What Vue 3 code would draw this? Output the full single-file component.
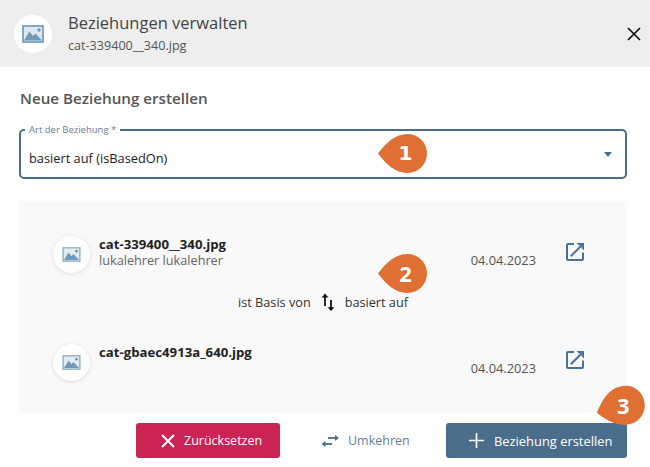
<script setup>
const rows = [
  { id: 1, name: 'cat-339400__340.jpg', user: 'lukalehrer lukalehrer', date: '04.04.2023' },
  { id: 2, name: 'cat-gbaec4913a_640.jpg', user: '', date: '04.04.2023' }
];
</script>

<template>
  <div class="dialog">
    <header class="head">
      <div class="avatar">
        <svg width="22" height="18" viewBox="0 0 22 18">
          <rect x="0" y="0" width="22" height="18" fill="#dbe6ee" />
          <rect x="1" y="1" width="20" height="16" fill="none" stroke="#6d9ab9" stroke-width="1.6" />
          <path d="M2 15.5 L7.5 6.5 L11 11 L13.5 8.5 L20 15.5Z" fill="#6d9ab9" />
          <circle cx="17" cy="5" r="1.7" fill="#6d9ab9" />
        </svg>
      </div>
      <div class="head-text">
        <div class="title">Beziehungen verwalten</div>
        <div class="sub">cat-339400__340.jpg</div>
      </div>
      <svg class="close" width="14" height="14" viewBox="0 0 14 14">
        <path d="M1 1 L13 13 M13 1 L1 13" stroke="#111" stroke-width="1.7" fill="none" />
      </svg>
    </header>

    <main class="content">
      <h2 class="section">Neue Beziehung erstellen</h2>

      <div class="select">
        <span class="select-label">Art der Beziehung *</span>
        <span class="select-value">basiert auf (isBasedOn)</span>
        <span class="caret"></span>
        <div class="badge badge-1">
          <svg width="49" height="39" viewBox="0 0 49 39"><path d="M0 19.5 C8 9 17 0 29.5 0 A19.5 19.5 0 0 1 29.5 39 C17 39 8 30 0 19.5Z" fill="#e06f34" /></svg>
          <span>1</span>
        </div>
      </div>

      <section class="panel">
        <div class="row" v-for="(r, i) in rows" :key="r.id">
          <div class="avatar shadow">
            <svg width="19" height="15" viewBox="0 0 22 18">
              <rect x="0" y="0" width="22" height="18" fill="#e3ebf1" />
              <rect x="1" y="1" width="20" height="16" fill="none" stroke="#8fb0c8" stroke-width="1.6" />
              <path d="M2 15.5 L7.5 6.5 L11 11 L13.5 8.5 L20 15.5Z" fill="#6d9ab9" />
              <circle cx="17" cy="5" r="1.7" fill="#6d9ab9" />
            </svg>
          </div>
          <div class="info">
            <div class="name">{{ r.name }}</div>
            <div class="user">{{ r.user }}</div>
          </div>
          <div class="date">{{ r.date }}</div>
          <svg class="open" width="18" height="18" viewBox="0 0 18 18">
            <path d="M8 1 H2 A1 1 0 0 0 1 2 V16 A1 1 0 0 0 2 17 H16 A1 1 0 0 0 17 16 V9.5" fill="none" stroke="#4a7299" stroke-width="2" />
            <path d="M4.8 13.2 L15.5 2.5" fill="none" stroke="#4a7299" stroke-width="2" />
            <path d="M10.5 0 H18 V7.5 L15.5 5 V2.5 H13Z" fill="#4a7299" />
          </svg>
          <div class="relation" v-if="i === 0">
            <span>ist Basis von</span>
            <svg width="14" height="18" viewBox="0 0 14 18">
              <path d="M4 13 V3" fill="none" stroke="#111" stroke-width="1.8" />
              <path d="M0.6 4.6 L4 0.6 L7.4 4.6Z" fill="#111" />
              <path d="M10 7 V16" fill="none" stroke="#111" stroke-width="1.8" />
              <path d="M6.6 14.2 L10 18 L13.4 14.2Z" fill="#111" />
            </svg>
            <span>basiert auf</span>
          </div>
        </div>
        <div class="badge badge-2">
          <svg width="49" height="39" viewBox="0 0 49 39"><path d="M0 19.5 C8 9 17 0 29.5 0 A19.5 19.5 0 0 1 29.5 39 C17 39 8 30 0 19.5Z" fill="#e06f34" /></svg>
          <span>2</span>
        </div>
      </section>

      <div class="actions">
        <button class="btn reset">
          <svg width="14" height="14" viewBox="0 0 14 14"><path d="M1 1 L13 13 M13 1 L1 13" stroke="#fff" stroke-width="2.1" fill="none" /></svg>
          Zurücksetzen
        </button>
        <button class="btn flip">
          <svg width="18" height="14" viewBox="0 0 18 14">
            <path d="M7 4 H15" fill="none" stroke="#4a6d8c" stroke-width="1.8" />
            <path d="M14 1 L18 4 L14 7Z" fill="#4a6d8c" />
            <path d="M4 10 H11" fill="none" stroke="#4a6d8c" stroke-width="1.8" />
            <path d="M4.5 7 L0.5 10 L4.5 13Z" fill="#4a6d8c" />
          </svg>
          Umkehren
        </button>
        <button class="btn create">
          <svg width="15" height="15" viewBox="0 0 15 15"><path d="M7.5 0 V15 M0 7.5 H15" stroke="#fff" stroke-width="1.7" fill="none" /></svg>
          Beziehung erstellen
          <div class="badge badge-3">
            <svg width="49" height="39" viewBox="0 0 49 39"><path d="M0 19.5 C8 9 17 0 29.5 0 A19.5 19.5 0 0 1 29.5 39 C17 39 8 30 0 19.5Z" fill="#e06f34" /></svg>
            <span>3</span>
          </div>
        </button>
      </div>
    </main>
  </div>
</template>

<style>
  html, body {
    margin: 0;
    background: #fff;
  }
</style>

<style scoped>
  .dialog {
    width: 650px;
    height: 467px;
    overflow: hidden;
    font-family: "Open Sans", sans-serif;
    color: #333;
  }

  .head {
    height: 67px;
    background: #eeeeee;
    display: flex;
    align-items: center;
    padding-left: 14px;
    padding-right: 10px;
    box-sizing: border-box;
  }

  .avatar {
    width: 38px;
    height: 38px;
    border-radius: 50%;
    background: #fff;
    display: flex;
    align-items: center;
    justify-content: center;
    flex: none;
  }

  .shadow {
    width: 37px;
    height: 37px;
    box-shadow: 0 1px 4px rgba(0, 0, 0, 0.12);
  }

  .head-text {
    margin-left: 16px;
    flex: 1;
    margin-top: 2px;
  }

  .title {
    font-size: 16.5px;
    line-height: 22px;
    color: #444;
  }

  .sub {
    font-size: 12.6px;
    line-height: 24px;
    color: #555;
  }

  .close {
    margin-right: -1px;
  }

  .content {
    padding: 0 23px 0 19px;
  }

  .section {
    margin: 21px 0 0 1px;
    font-size: 15.2px;
    line-height: 21px;
    font-weight: 600;
    color: #555;
  }

  .select {
    position: relative;
    height: 50px;
    margin-top: 20px;
    box-sizing: border-box;
    border: 2px solid #4a6d8c;
    border-radius: 5px;
    display: flex;
    align-items: center;
    padding: 8px 8px 0 8px;
  }

  .select-label {
    position: absolute;
    left: 4px;
    top: -8px;
    padding: 0 4px;
    background: #fff;
    font-size: 9.5px;
    line-height: 13px;
    color: #5f7f9b;
  }

  .select-value {
    font-size: 12.8px;
    color: #222;
    flex: 1;
  }

  .caret {
    width: 0;
    height: 0;
    border-left: 4.5px solid transparent;
    border-right: 4.5px solid transparent;
    border-top: 5px solid #4a6d8c;
    margin-right: 5px;
    margin-top: -7px;
  }

  .badge {
    position: absolute;
    width: 49px;
    height: 39px;
    line-height: 0;
  }

  .badge span {
    position: absolute;
    left: 17px;
    top: 0;
    width: 21px;
    height: 38px;
    line-height: 38px;
    text-align: center;
    color: #fff;
    font-size: 22px;
    font-weight: 700;
  }

  .badge-1 span {
    font-family: "DejaVu Sans", sans-serif;
    font-size: 20px;
  }

  .badge-1 {
    left: 357px;
    top: 3px;
  }

  .badge-2 {
    left: 359px;
    top: 53px;
  }

  .badge-3 {
    right: -18px;
    top: -36px;
    transform: rotate(-15deg);
  }

  .badge-3 span {
    transform: rotate(15deg);
  }

  .panel {
    position: relative;
    margin-top: 22px;
    height: 212px;
    background: #f9f9f9;
    padding: 35px 43px 0 34px;
    box-sizing: border-box;
  }

  .row {
    position: relative;
    display: flex;
    align-items: flex-start;
    height: 108px;
  }

  .info {
    margin-left: 9px;
    flex: 1;
  }

  .name {
    font-size: 13.2px;
    line-height: 18px;
    margin-top: -1px;
    font-weight: 700;
    color: #222;
  }

  .user {
    font-size: 12.7px;
    line-height: 15px;
    color: #666;
  }

  .date {
    font-size: 12.8px;
    line-height: 16px;
    color: #555;
    margin-top: 16px;
    margin-right: 31px;
  }

  .open {
    margin-top: 7px;
    margin-left: -1px;
  }

  .relation {
    position: absolute;
    left: 0;
    right: 0;
    top: 57px;
    padding-left: 9px;
    display: flex;
    justify-content: center;
    align-items: center;
    gap: 10px;
    font-size: 12.7px;
    color: #333;
  }

  .actions {
    display: flex;
    justify-content: flex-end;
    margin-top: 10px;
  }

  .btn {
    position: relative;
    height: 35px;
    border: none;
    border-radius: 3px;
    font-family: inherit;
    display: flex;
    align-items: center;
    padding: 0;
    flex: none;
  }

  .btn svg {
    margin-right: 9px;
  }

  .reset {
    width: 144px;
    padding-left: 25px;
    background: #cc2355;
    color: #fff;
    font-size: 12.5px;
  }

  .flip {
    width: 166px;
    padding-left: 41px;
    background: transparent;
    color: #5f7f9b;
    font-size: 12.5px;
  }

  .create {
    width: 181px;
    padding-left: 23px;
    background: #4a6d8c;
    color: #fff;
    font-size: 12.9px;
  }

  .create > svg {
    margin-right: 10px;
  }

  .create .badge svg {
    margin-right: 0;
  }
</style>
